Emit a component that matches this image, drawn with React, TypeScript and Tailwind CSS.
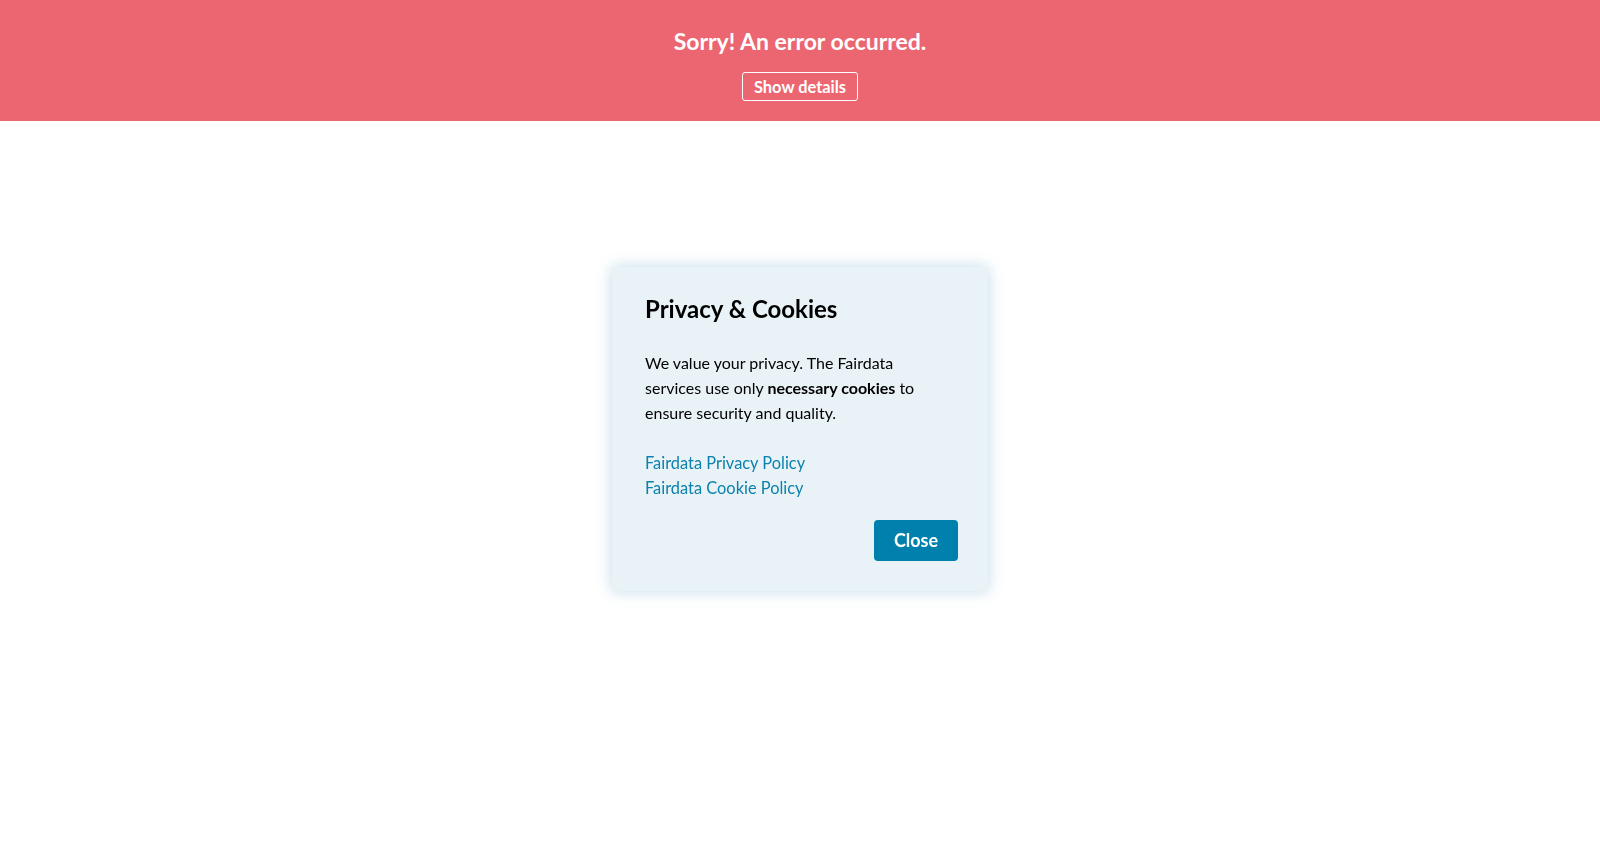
import React from "react";

// Bandeau d'erreur + fenêtre cookies
export default function App() {
  return (
    <div className="min-h-screen bg-white" style={{ fontFamily: "Lato, 'Open Sans', sans-serif" }}>
      {/* Bandeau d'erreur */}
      <div className="h-[121px] bg-[#ec6672] flex flex-col items-center pt-[26px]">
        <h1 className="text-white text-[23px] font-bold leading-[30px]">Sorry! An error occurred.</h1>
        <button className="mt-[16px] h-[29px] px-[11px] pt-[2px] border border-white rounded-[3px] text-white text-[16.4px] font-bold leading-none">
          Show details
        </button>
      </div>

      {/* Modal cookies */}
      <div className="fixed inset-0 flex items-center justify-center">
        <div className="w-[376px] bg-[#e9f2f7] pl-[33px] pr-[30px] pt-[27px] pb-[30px] shadow-[0_0_14px_rgba(80,150,185,0.35)]">
          <h2 className="text-[24px] font-bold leading-[30px] text-black">Privacy &amp; Cookies</h2>
          <p className="mt-[26px] max-w-[280px] text-[16px] leading-[25px] text-black">
            We value your privacy. The Fairdata services use only <b>necessary cookies</b> to ensure security and quality.
          </p>
          <div className="mt-[25px] flex flex-col text-[16.4px] leading-[25px] text-[#0b82ad]">
            <a href="#">Fairdata Privacy Policy</a>
            <a href="#">Fairdata Cookie Policy</a>
          </div>
          <div className="mt-[20px] flex justify-end">
            <button className="w-[84px] h-[41px] rounded-[4px] bg-[#0080ad] text-white text-[18px] font-bold">Close</button>
          </div>
        </div>
      </div>
    </div>
  );
}
